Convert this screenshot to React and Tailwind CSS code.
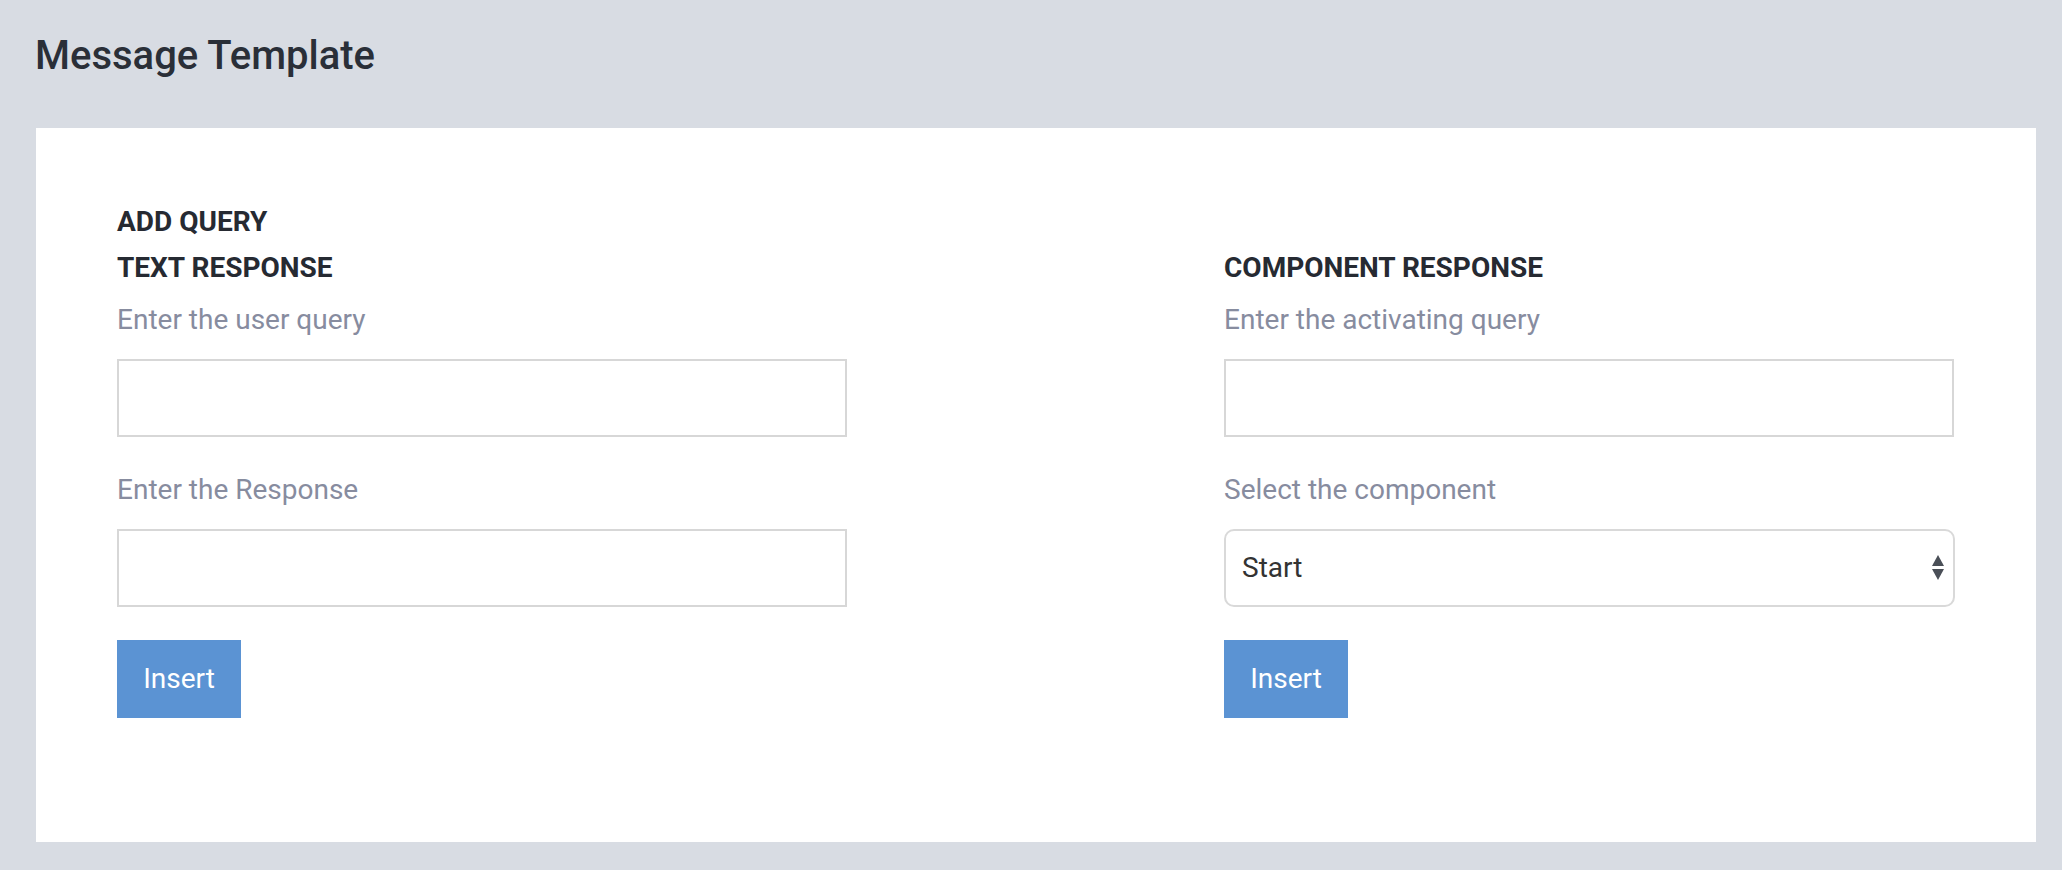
import React from "react";

const font = { fontFamily: "Roboto, 'Liberation Sans', sans-serif" };

function Label({ children }) {
  return (
    <p className="text-[28px] leading-[40px] text-[#878c9f] mb-[19px]">
      {children}
    </p>
  );
}

function TextInput() {
  return (
    <input
      type="text"
      className="block w-[730px] h-[78px] border-2 border-[#d7d7d7] bg-white px-4 text-[28px] outline-none"
    />
  );
}

function InsertButton() {
  return (
    <button className="w-[124px] h-[78px] bg-[#5b93d3] text-white text-[28px] leading-[40px] flex items-center justify-center">
      Insert
    </button>
  );
}

export default function App() {
  return (
    <div className="min-h-screen bg-[#d8dce3] pb-[28px]" style={font}>
      {/* Header */}
      <header className="pl-[35px] pt-[31px] pb-[47px]">
        <h1 className="text-[40px] leading-[50px] font-medium text-[#2a2f38]">
          Message Template
        </h1>
      </header>

      {/* Card */}
      <main className="ml-[36px] w-[2000px] h-[714px] bg-white pl-[81px] pt-[74px]">
        <h2 className="text-[28px] leading-[40px] font-bold text-[#262a32] mb-[6px]">
          ADD QUERY
        </h2>

        <div className="flex">
          {/* Text response */}
          <div className="w-[1107px]">
            <h3 className="text-[28px] leading-[40px] font-bold text-[#262a32] mb-[12px]">
              TEXT RESPONSE
            </h3>
            <Label>Enter the user query</Label>
            <TextInput />
            <div className="mt-[33px]">
              <Label>Enter the Response</Label>
              <TextInput />
            </div>
            <div className="mt-[33px]">
              <InsertButton />
            </div>
          </div>

          {/* Component response */}
          <div className="flex-1">
            <h3 className="text-[28px] leading-[40px] font-bold text-[#262a32] mb-[12px]">
              COMPONENT RESPONSE
            </h3>
            <Label>Enter the activating query</Label>
            <TextInput />
            <div className="mt-[33px]">
              <Label>Select the component</Label>
              <div className="w-[731px] h-[78px] border-2 border-[#d9d9d9] rounded-[10px] flex items-center justify-between pl-[16px] pr-[8px]">
                <span className="text-[28px] leading-[40px] text-[#333333]">
                  Start
                </span>
                <svg width="14" height="28" viewBox="0 0 14 28">
                  <polygon points="7,1 13,12 1,12" fill="#4a4f57" />
                  <polygon points="1,15 13,15 7,26" fill="#4a4f57" />
                </svg>
              </div>
            </div>
            <div className="mt-[33px]">
              <InsertButton />
            </div>
          </div>
        </div>
      </main>
    </div>
  );
}
